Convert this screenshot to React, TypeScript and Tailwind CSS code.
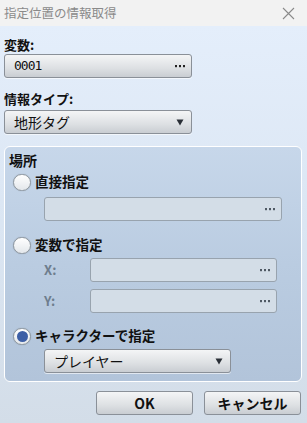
import React from "react";

const jp = "font-['Noto_Sans_CJK_JP','Noto_Sans',sans-serif]";

function Dots({ dim }: { dim?: boolean }) {
  const c = dim ? "#4f5964" : "#222";
  return (
    <svg width="10" height="3" viewBox="0 0 10 3">
      <rect x="0" y="0" width="2" height="2.2" fill={c} />
      <rect x="4" y="0" width="2" height="2.2" fill={c} />
      <rect x="8" y="0" width="2" height="2.2" fill={c} />
    </svg>
  );
}

function Radio({ checked, label }: { checked?: boolean; label: string }) {
  return (
    <div className="flex items-center h-[20px]">
      <div className="ml-[8px] w-[18px] h-[17px] rounded-full border border-[#8e979f] bg-[linear-gradient(#ffffff,#e3e7eb)] flex items-center justify-center shadow-[0_0_1px_rgba(0,0,0,0.25)]">
        {checked && <div className="w-[11px] h-[11px] rounded-full bg-[#3d5fa6]" />}
      </div>
      <span className="ml-[4px] text-[13.5px] font-bold text-[#111] leading-none">{label}</span>
    </div>
  );
}

function ActiveBox({ children, right, w }: { children: React.ReactNode; right: React.ReactNode; w: string }) {
  return (
    <div className={`${w} h-[24px] rounded-[3px] border border-[#8a9098] bg-[linear-gradient(#f4f5f6,#dde0e3_60%,#c9cdd2)] flex items-center justify-between pl-[8px] pr-[6px] shadow-[0_1px_0_rgba(255,255,255,0.6)]`}>
      {children}
      {right}
    </div>
  );
}

function DisabledBox({ w }: { w: string }) {
  return (
    <div className={`${w} h-[24px] rounded-[3px] border border-[#98a3ae] bg-[#d3dde7] flex items-center justify-end pr-[6px]`}>
      <Dots dim />
    </div>
  );
}

function Tri() {
  return (
    <svg width="8" height="7" viewBox="0 0 8 7" className="mr-[1px]">
      <path d="M0.5 0.5 H7.5 L4 6.5 Z" fill="#2a2f36" />
    </svg>
  );
}

export default function App() {
  return (
    <div className={`w-[307px] h-[423px] overflow-hidden flex flex-col ${jp}`}>
      <div className="h-[26px] bg-[#f2f2f2] flex items-center justify-between pl-[4px] pr-[12px] shrink-0">
        <span className="text-[12.5px] text-[#8a8a8a] leading-none">指定位置の情報取得</span>
        <svg width="13" height="13" viewBox="0 0 13 13">
          <path d="M1 1 L12 12 M12 1 L1 12" stroke="#8a8a8a" strokeWidth="1.1" />
        </svg>
      </div>
      <div className="flex-1 bg-[linear-gradient(#e4eefb,#dbe6f3_50%,#d3dde8)] pl-[4px] pr-[5px] flex flex-col">
        <div className="mt-[10px] h-[18px] flex items-center text-[13px] font-bold text-[#111]">変数:</div>
        <ActiveBox w="w-[188px]" right={<Dots />}>
          <span className="font-['DejaVu_Sans_Mono',monospace] text-[13px] tracking-[-1px] text-[#111] pl-[1px]">0001</span>
        </ActiveBox>
        <div className="mt-[12px] h-[18px] flex items-center text-[13px] font-bold text-[#111]">情報タイプ:</div>
        <div className="mt-[2px]">
          <ActiveBox w="w-[188px]" right={<Tri />}>
            <span className="text-[14px] text-[#111] pl-[1px]">地形タグ</span>
          </ActiveBox>
        </div>
        <div className="mt-[12px] h-[236px] rounded-[6px] border border-white bg-[linear-gradient(#c7d7ea,#bacce1_50%,#b2c4da)] flex flex-col">
          <div className="mt-[3px] h-[20px] pl-[4px] flex items-center text-[14px] font-bold text-[#111]">場所</div>
          <div className="mt-[2px]">
            <Radio label="直接指定" />
          </div>
          <div className="mt-[5px] pl-[39px]">
            <DisabledBox w="w-[238px]" />
          </div>
          <div className="mt-[14px]">
            <Radio label="変数で指定" />
          </div>
          <div className="mt-[3px] flex items-center">
            <span className="ml-[39px] w-[46px] text-[13px] font-bold text-[#6e7d8d]">X:</span>
            <DisabledBox w="w-[187px]" />
          </div>
          <div className="mt-[7px] flex items-center">
            <span className="ml-[39px] w-[46px] text-[13px] font-bold text-[#6e7d8d]">Y:</span>
            <DisabledBox w="w-[187px]" />
          </div>
          <div className="mt-[13px]">
            <Radio checked label="キャラクターで指定" />
          </div>
          <div className="mt-[3px] pl-[39px]">
            <ActiveBox w="w-[187px]" right={<Tri />}>
              <span className="text-[14px] text-[#111] pl-[1px]">プレイヤー</span>
            </ActiveBox>
          </div>
        </div>
        <div className="mt-[9px] flex justify-end gap-[11px] pr-[1px]">
          <button className="w-[97px] h-[24px] rounded-[3px] border border-[#8a9098] bg-[linear-gradient(#f4f5f6,#dde0e3_60%,#c9cdd2)] text-[14px] font-bold text-[#111] leading-none">OK</button>
          <button className="w-[97px] h-[24px] rounded-[3px] border border-[#8a9098] bg-[linear-gradient(#f4f5f6,#dde0e3_60%,#c9cdd2)] text-[14px] font-bold text-[#111] leading-none">キャンセル</button>
        </div>
      </div>
    </div>
  );
}
